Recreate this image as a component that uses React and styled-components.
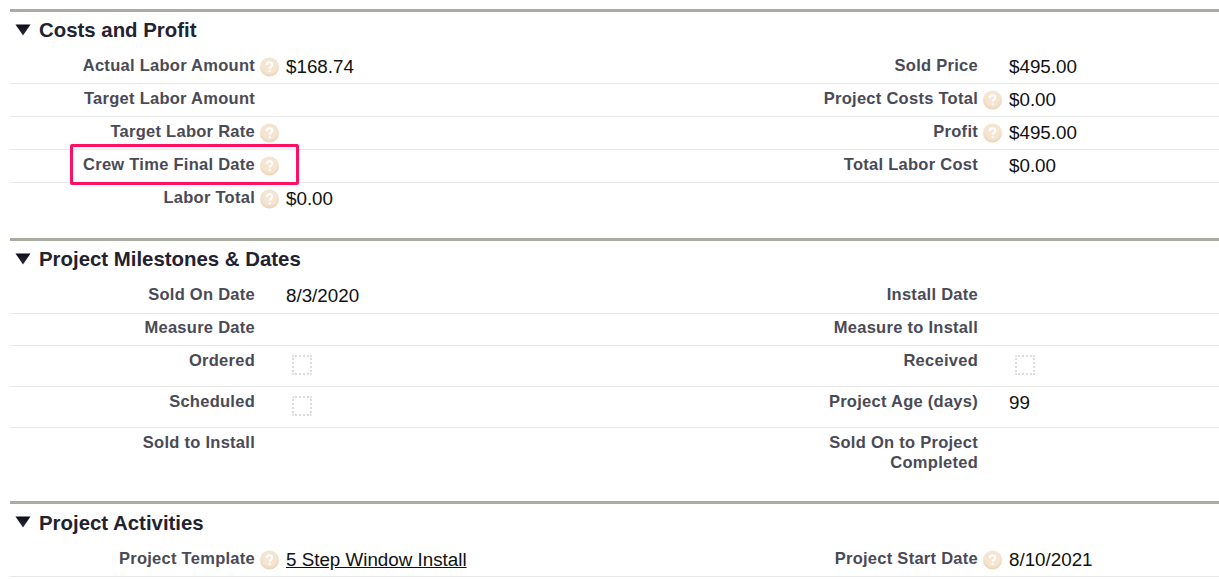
import React from "react"
import styled, { createGlobalStyle } from "styled-components"

const GlobalStyle = createGlobalStyle`
  html, body {
    margin: 0;
    padding: 0;
    background: #fff;
    overflow: hidden;
    font-family: "Liberation Sans", Arial, sans-serif;
  }
`

const sections = [
  {
    title: "Costs and Profit",
    head: 39,
    gap: 22,
    rows: [
      { left: { label: "Actual Labor Amount", help: true, value: "$168.74" }, right: { label: "Sold Price", value: "$495.00" } },
      { left: { label: "Target Labor Amount" }, right: { label: "Project Costs Total", help: true, value: "$0.00" } },
      { left: { label: "Target Labor Rate", help: true }, right: { label: "Profit", help: true, value: "$495.00" } },
      { left: { label: "Crew Time Final Date", help: true, marked: true }, right: { label: "Total Labor Cost", value: "$0.00" } },
      { left: { label: "Labor Total", help: true, value: "$0.00" }, right: {}, last: true },
    ],
  },
  {
    title: "Project Milestones & Dates",
    head: 39,
    gap: 20,
    rows: [
      { left: { label: "Sold On Date", value: "8/3/2020" }, right: { label: "Install Date" }, height: 34 },
      { left: { label: "Measure Date" }, right: { label: "Measure to Install" }, height: 32, tight: true },
      { left: { label: "Ordered", check: true }, right: { label: "Received", check: true }, height: 41 },
      { left: { label: "Scheduled", check: true }, right: { label: "Project Age (days)", value: "99" }, height: 41 },
      { left: { label: "Sold to Install" }, right: { label: "Sold On to Project Completed" }, height: 53, last: true },
    ],
  },
  {
    title: "Project Activities",
    head: 40,
    top: 7,
    rows: [
      {
        left: { label: "Project Template", help: true, value: "5 Step Window Install", link: true },
        right: { label: "Project Start Date", help: true, value: "8/10/2021" },
      },
    ],
  },
]

function HelpIcon() {
  return (
    <svg width="19" height="20" viewBox="0 0 19 20">
      <defs>
        <radialGradient id="helpFill" cx="50%" cy="40%" r="60%">
          <stop offset="0%" stopColor="#f6e9d9" />
          <stop offset="70%" stopColor="#f4e3cf" />
          <stop offset="100%" stopColor="#ead2b4" />
        </radialGradient>
      </defs>
      <circle cx="9.5" cy="10" r="9.5" fill="url(#helpFill)" />
      <path
        d="M6.6 8c.1-1.8 1.3-2.7 2.9-2.7 1.6 0 2.8 1 2.8 2.4 0 1.1-.6 1.6-1.4 2.2-.8.5-1.2 1-1.2 1.9"
        fill="none"
        stroke="#fff"
        strokeWidth="1.9"
      />
      <rect x="8.7" y="13.2" width="2" height="2" fill="#fff" />
    </svg>
  )
}

function Arrow() {
  return (
    <svg width="16" height="13" viewBox="0 0 16 13">
      <defs>
        <linearGradient id="arrowFill" x1="0" y1="0" x2="0" y2="1">
          <stop offset="0%" stopColor="#0d0d1a" />
          <stop offset="100%" stopColor="#2c2c3a" />
        </linearGradient>
      </defs>
      <path d="M0.5 1.5H15.5L8 12.5Z" fill="url(#arrowFill)" />
    </svg>
  )
}

function Field({ label, help, value, link, check, marked, tight }) {
  return (
    <>
      <Label $tight={tight}>
        {label}
        {marked && <Marker />}
      </Label>
      <HelpCell>{help && <HelpIcon />}</HelpCell>
      <Value>
        {check && <CheckBox />}
        {link ? <ValueLink href="#">{value}</ValueLink> : value}
      </Value>
    </>
  )
}

export default function App() {
  return (
    <Page>
      <GlobalStyle />
      {sections.map((section) => (
        <Section key={section.title} $gap={section.gap}>
          <SectionHeader $height={section.head} $top={section.top}>
            <Arrow />
            <SectionTitle>{section.title}</SectionTitle>
          </SectionHeader>
          {section.rows.map((row) => (
            <Row key={row.left.label} $height={row.height} $last={row.last}>
              <Field {...row.left} tight={row.tight} />
              <Field {...row.right} tight={row.tight} />
            </Row>
          ))}
        </Section>
      ))}
    </Page>
  )
}

const Page = styled.div`
  padding: 9px 0 0 10px;
  height: 570px;
  overflow: hidden;
`
const Section = styled.section`
  border-top: 3px solid #a8ada0;
  margin-bottom: ${(p) => p.$gap || 0}px;
`
const SectionHeader = styled.div`
  display: flex;
  align-items: center;
  gap: 8px;
  box-sizing: border-box;
  height: ${(p) => p.$height}px;
  padding: ${(p) => p.$top || 6}px 0 0 5px;
  & > svg {
    margin-bottom: ${(p) => p.$height - 28}px;
  }
`
const SectionTitle = styled.h3`
  margin: 0;
  align-self: flex-start;
  font-size: 20.4px;
  line-height: 24px;
  font-weight: 700;
  color: #222230;
`
const Row = styled.div`
  display: grid;
  grid-template-columns: 245px 31px 492px 200px 31px 1fr;
  box-sizing: border-box;
  height: ${(p) => p.$height || 33}px;
  border-bottom: ${(p) => (p.$last ? "none" : "1px solid #e8e8e8")};
`
const Label = styled.div`
  position: relative;
  padding-top: ${(p) => (p.$tight ? 3 : 4)}px;
  font-size: 16.5px;
  letter-spacing: 0.27px;
  line-height: 20px;
  font-weight: 700;
  text-align: right;
  color: #4a4a56;
`
const Marker = styled.span`
  position: absolute;
  left: 60px;
  top: -6px;
  width: 229px;
  height: 41px;
  box-sizing: border-box;
  border: 3px solid #ff1060;
  border-radius: 2px;
`
const HelpCell = styled.div`
  padding: 6px 0 0 5px;
`
const Value = styled.div`
  padding-top: 4px;
  font-size: 18.8px;
  line-height: 24px;
  color: #111;
`
const ValueLink = styled.a`
  color: #111;
  text-decoration: underline;
`
const CheckBox = styled.span`
  display: block;
  width: 20px;
  height: 20px;
  margin: 5px 0 0 6px;
  box-sizing: border-box;
  border: 2px dotted #dcdcdc;
  border-radius: 2px;
`
